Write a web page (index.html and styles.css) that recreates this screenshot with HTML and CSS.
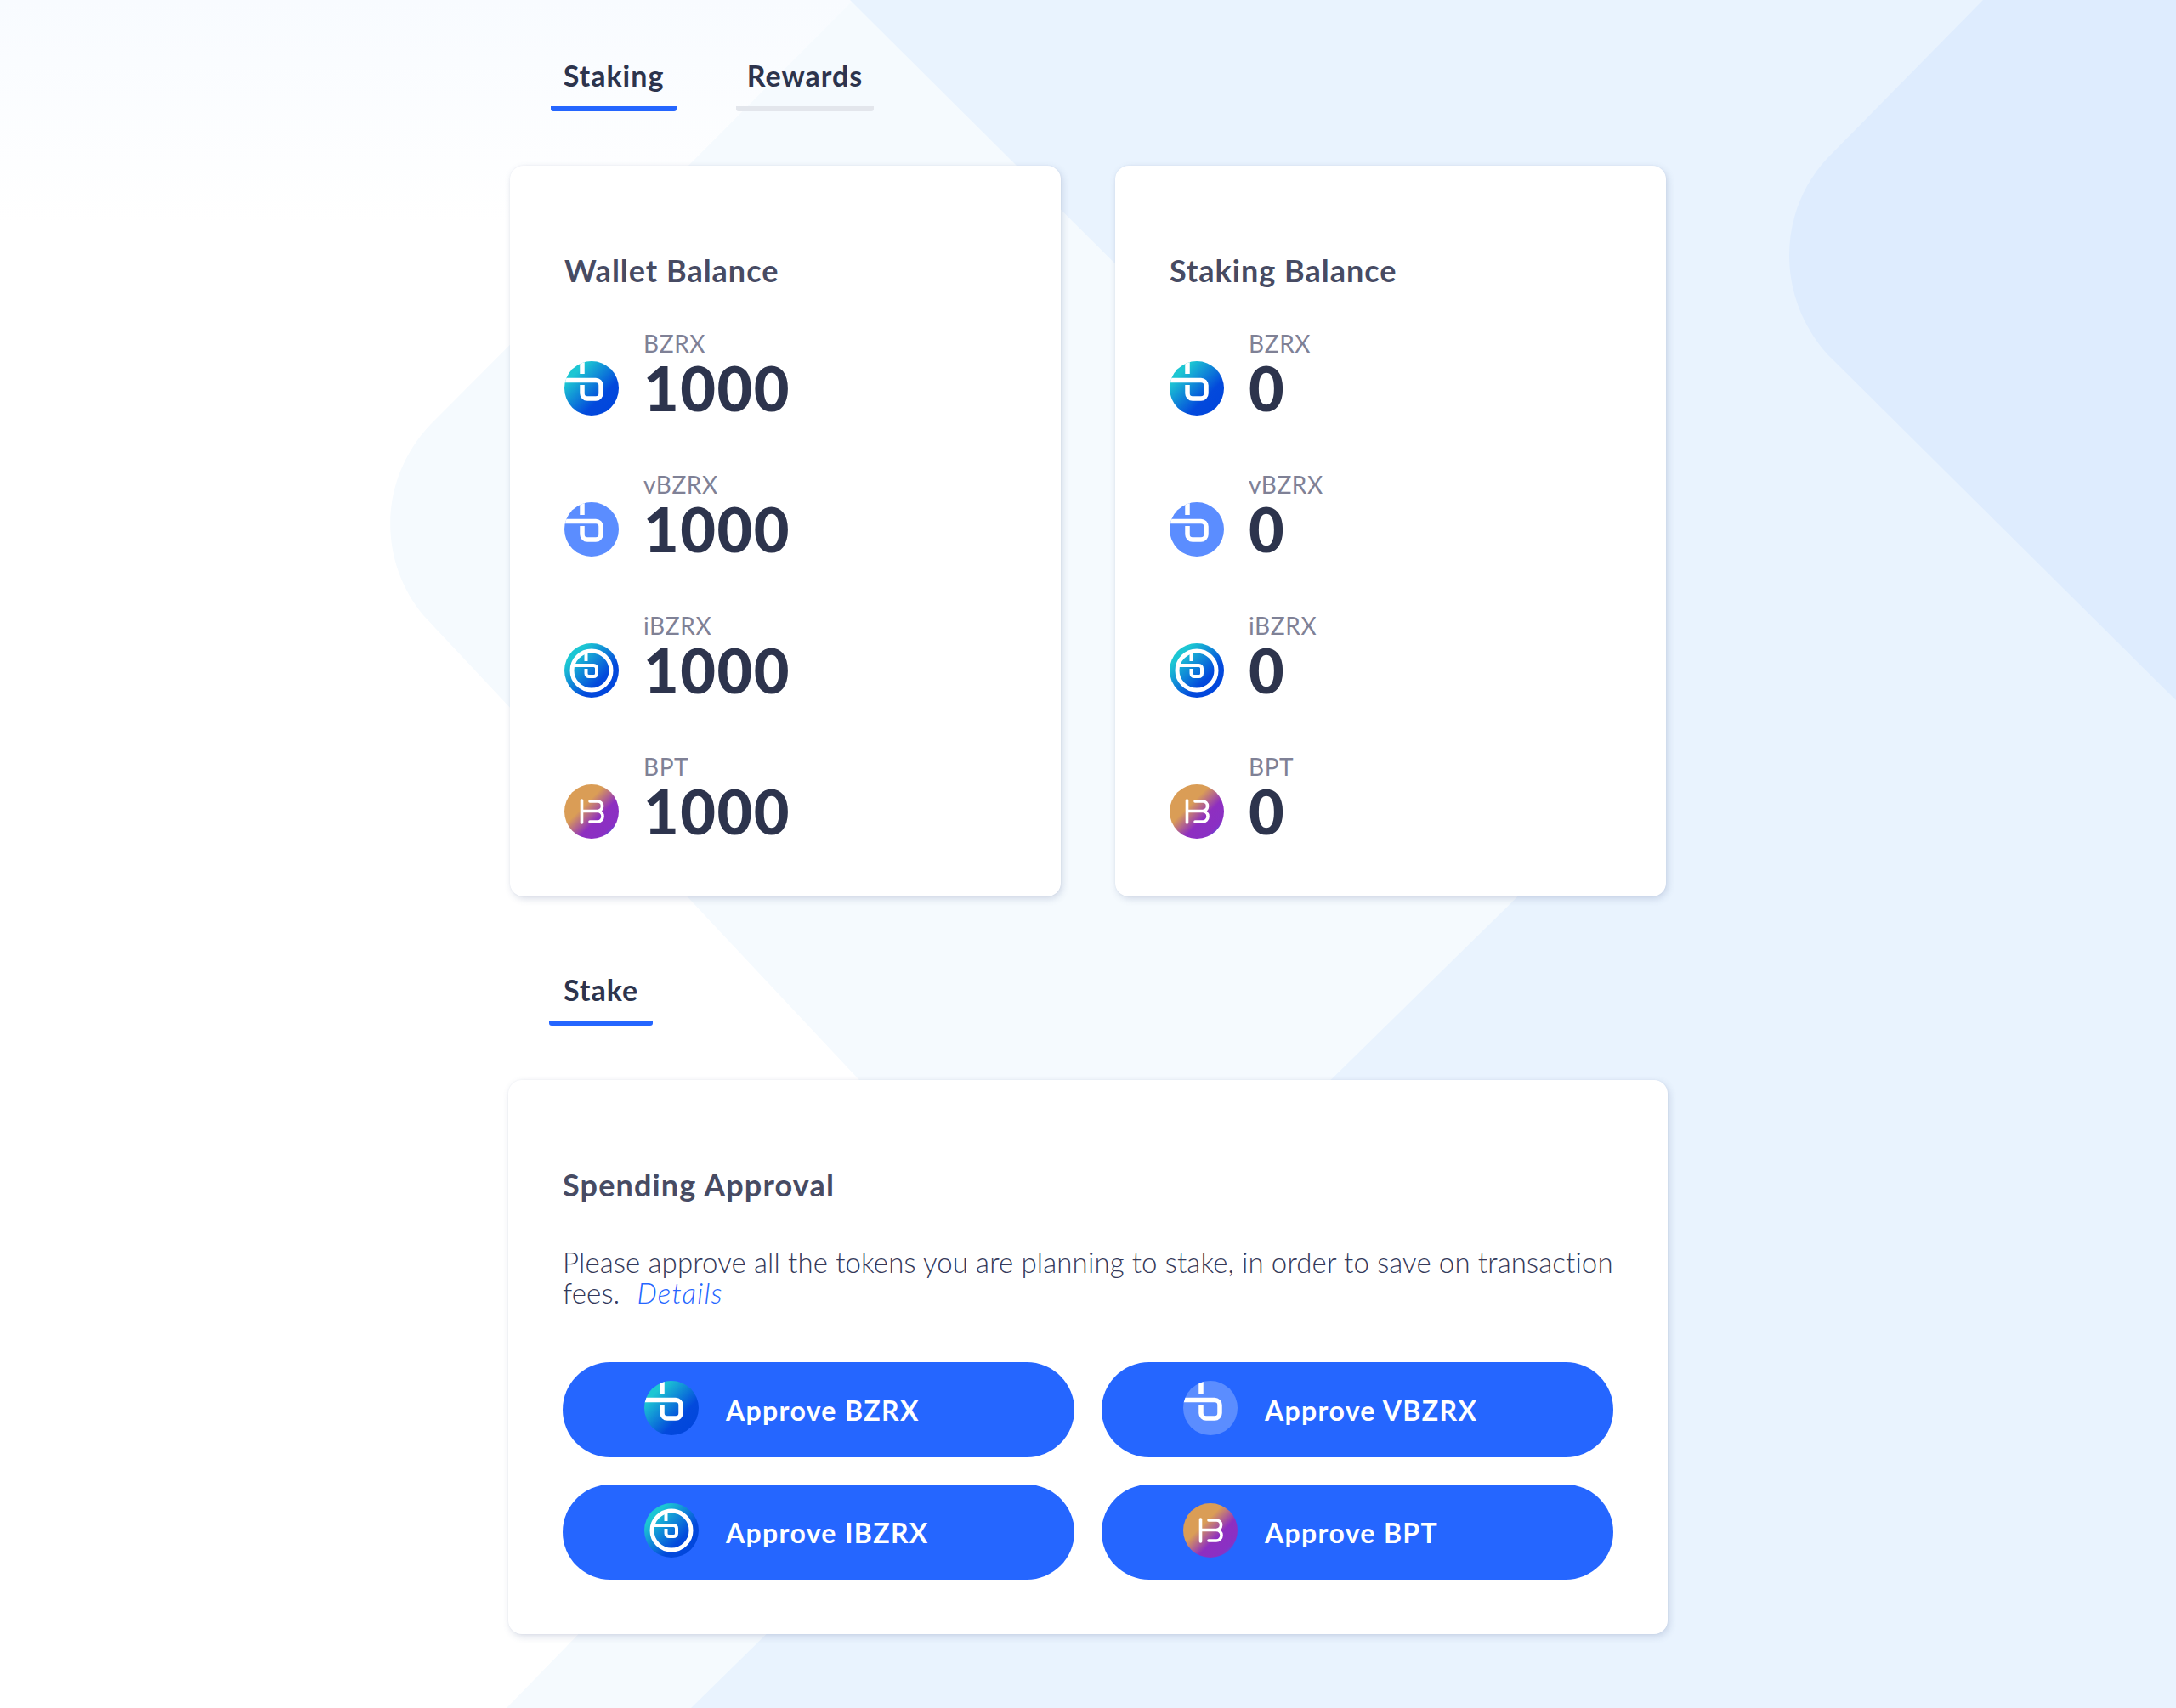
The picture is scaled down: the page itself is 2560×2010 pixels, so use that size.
FILE: index.html
```html
<!DOCTYPE html>
<html lang="en">
<head>
<meta charset="utf-8">
<title>Staking</title>
<link rel="stylesheet" href="styles.css">
</head>
<body>
<svg class="defs" aria-hidden="true">
  <defs>
    <linearGradient id="gBlue" x1="0.12" y1="0.12" x2="0.88" y2="0.88">
      <stop offset="0.12" stop-color="#1cc6d3"/>
      <stop offset="0.72" stop-color="#0349dc"/>
      <stop offset="1" stop-color="#0146dc"/>
    </linearGradient>
    <linearGradient id="gBpt" x1="0.12" y1="0.12" x2="0.88" y2="0.88">
      <stop offset="0.34" stop-color="#da9d56"/>
      <stop offset="0.66" stop-color="#8e2fc0"/>
      <stop offset="0.92" stop-color="#8a30c4"/>
      <stop offset="1" stop-color="#5a50d8"/>
    </linearGradient>
    <clipPath id="cCircle"><circle cx="32" cy="32" r="32"/></clipPath>
    <symbol id="glyphB" viewBox="0 0 64 64">
      <g clip-path="url(#cCircle)" fill="none" stroke="#fff" stroke-width="5.5">
        <path d="M21 -1V15"/>
        <path d="M-1 22.5H37a6 6 0 0 1 6 6V38a6 6 0 0 1 -6 6H27a6 6 0 0 1 -6 -6V28"/>
      </g>
    </symbol>
    <symbol id="icoBzrx" viewBox="0 0 64 64">
      <circle cx="32" cy="32" r="32" fill="url(#gBlue)"/>
      <use href="#glyphB"/>
    </symbol>
    <symbol id="icoVbzrx" viewBox="0 0 64 64">
      <circle cx="32" cy="32" r="32" fill="#5b8dff"/>
      <use href="#glyphB"/>
    </symbol>
    <symbol id="icoIbzrx" viewBox="0 0 64 64">
      <circle cx="32" cy="32" r="32" fill="url(#gBlue)"/>
      <circle cx="32" cy="32" r="23" fill="none" stroke="#fff" stroke-width="5"/>
      <g fill="none" stroke="#fff" stroke-width="4">
        <path d="M25.5 10V21"/>
        <path d="M10 26H34.5a3.5 3.5 0 0 1 3.5 3.5V35.5a3.5 3.5 0 0 1 -3.5 3.5H29a3.5 3.5 0 0 1 -3.5 -3.5V30"/>
      </g>
    </symbol>
    <symbol id="icoBpt" viewBox="0 0 64 64">
      <circle cx="32" cy="32" r="32" fill="url(#gBpt)"/>
      <g fill="none" stroke="#fff" stroke-width="3.6" stroke-linecap="round">
        <path d="M20.5 19V45"/>
        <path d="M21 31.5H39"/>
        <path d="M30 20H39a5.5 5.5 0 0 1 5.5 5.5V26a5.5 5.5 0 0 1 -5.5 5.5a6 6 0 0 1 6 6V38a6 6 0 0 1 -6 6H30"/>
      </g>
    </symbol>
  </defs>
</svg>

<svg class="backdrop" viewBox="0 0 2560 2010" aria-hidden="true">
  <defs>
    <linearGradient id="gFade" x1="0" y1="0" x2="0" y2="1">
      <stop offset="0" stop-color="#f8fbff"/>
      <stop offset="0.13" stop-color="#fff"/>
    </linearGradient>
  </defs>
  <rect width="2560" height="2010" fill="url(#gFade)"/>
  <path class="shape-a" d="M1004 0L506 500C445 565 445 660 498 724L1160 1430L596 2010H2560V0Z"/>
  <path class="shape-b" d="M1000 0L1924 919L813 2010H2560V0Z"/>
  <path class="shape-c" d="M2333 0L2150 186C2090 250 2090 350 2150 417L2560 824V0Z"/>
</svg>

<main class="page">
  <nav class="tabs">
    <a class="tab tab-active">Staking</a>
    <a class="tab tab-idle">Rewards</a>
  </nav>

  <section class="balances">
    <article class="card">
      <h2 class="card-title">Wallet Balance</h2>
      <ul class="tokens">
        <li class="token"><svg class="token-icon"><use href="#icoBzrx"/></svg><div class="token-data"><span class="token-name">BZRX</span><span class="token-value">1000</span></div></li>
        <li class="token"><svg class="token-icon"><use href="#icoVbzrx"/></svg><div class="token-data"><span class="token-name">vBZRX</span><span class="token-value">1000</span></div></li>
        <li class="token"><svg class="token-icon"><use href="#icoIbzrx"/></svg><div class="token-data"><span class="token-name">iBZRX</span><span class="token-value">1000</span></div></li>
        <li class="token"><svg class="token-icon"><use href="#icoBpt"/></svg><div class="token-data"><span class="token-name">BPT</span><span class="token-value">1000</span></div></li>
      </ul>
    </article>
    <article class="card">
      <h2 class="card-title">Staking Balance</h2>
      <ul class="tokens">
        <li class="token"><svg class="token-icon"><use href="#icoBzrx"/></svg><div class="token-data"><span class="token-name">BZRX</span><span class="token-value">0</span></div></li>
        <li class="token"><svg class="token-icon"><use href="#icoVbzrx"/></svg><div class="token-data"><span class="token-name">vBZRX</span><span class="token-value">0</span></div></li>
        <li class="token"><svg class="token-icon"><use href="#icoIbzrx"/></svg><div class="token-data"><span class="token-name">iBZRX</span><span class="token-value">0</span></div></li>
        <li class="token"><svg class="token-icon"><use href="#icoBpt"/></svg><div class="token-data"><span class="token-name">BPT</span><span class="token-value">0</span></div></li>
      </ul>
    </article>
  </section>

  <nav class="tabs tabs-stake">
    <a class="tab tab-active tab-stake">Stake</a>
  </nav>

  <section class="card card-wide">
    <h2 class="card-title">Spending Approval</h2>
    <p class="note">Please approve all the tokens you are planning to stake, in order to save on transaction<br>fees. <a class="note-link">Details</a></p>
    <div class="actions">
      <button class="approve"><svg class="approve-icon"><use href="#icoBzrx"/></svg>Approve BZRX</button>
      <button class="approve"><svg class="approve-icon"><use href="#icoVbzrx"/></svg>Approve VBZRX</button>
      <button class="approve"><svg class="approve-icon"><use href="#icoIbzrx"/></svg>Approve IBZRX</button>
      <button class="approve"><svg class="approve-icon"><use href="#icoBpt"/></svg>Approve BPT</button>
    </div>
  </section>
</main>
</body>
</html>
```

FILE: styles.css
```css
* { box-sizing: border-box; }

html, body {
  margin: 0;
  padding: 0;
}

body {
  position: relative;
  height: 2010px;
  overflow: hidden;
  background: #fff;
  color: #2d344d;
  font-family: "Lato", "Noto Sans", sans-serif;
}

.defs {
  position: absolute;
  width: 0;
  height: 0;
}

.backdrop {
  position: absolute;
  left: 0;
  top: 0;
  width: 2560px;
  height: 2010px;
}

.shape-a { fill: #f5fafe; }
.shape-b { fill: #e9f3fe; }
.shape-c { fill: #deecfe; }

.page {
  position: relative;
  width: 1364px;
  margin: 0 auto;
  padding-top: 69px;
}

.tabs {
  display: flex;
  gap: 70px;
  padding-left: 50px;
  margin-bottom: 64px;
}

.tabs-stake {
  margin-top: 90px;
  padding-left: 48px;
}

.tab {
  padding: 0 0 16px;
  font-size: 34px;
  line-height: 40px;
  font-weight: 700;
  letter-spacing: 1px;
  text-align: center;
  color: #2d344d;
  border-bottom: 6px solid #e3e6ec;
  border-radius: 0 0 3px 3px;
}

.tab-active { width: 148px; border-bottom-color: #2566ff; }
.tab-idle { width: 162px; }
.tab-stake { width: 122px; }

.balances {
  display: grid;
  grid-template-columns: 648px 648px;
  gap: 64px;
  padding: 0 2px;
}

.card {
  padding: 103px 64px 63px;
  background: #fff;
  border-radius: 16px;
  box-shadow: 2px 3px 8px rgba(70, 90, 140, 0.2), 0 0 2px rgba(70, 90, 140, 0.08);
}

.card-title {
  margin: 0 0 50px;
  font-size: 36px;
  line-height: 40px;
  font-weight: 700;
  letter-spacing: 1px;
  color: #474b63;
}

.tokens {
  display: flex;
  flex-direction: column;
  gap: 60px;
  margin: 0;
  padding: 0;
  list-style: none;
}

.token {
  display: flex;
  align-items: flex-end;
  gap: 29px;
}

.token-icon {
  flex: none;
  width: 64px;
  height: 64px;
  margin-bottom: 5px;
}

.token-data {
  display: flex;
  flex-direction: column;
  padding-bottom: 2px;
}

.token-name {
  font-size: 28px;
  line-height: 32px;
  font-weight: 400;
  letter-spacing: 0.6px;
  color: #7f8196;
}

.token-value {
  font-size: 72px;
  line-height: 72px;
  font-weight: 900;
  letter-spacing: 1.5px;
  color: #2d344d;
}

.card-wide {
  padding-bottom: 64px;
}

.card-wide .card-title {
  margin-bottom: 53px;
  letter-spacing: 1.15px;
}

.note {
  margin: 0 0 64px;
  font-size: 33px;
  line-height: 36px;
  font-weight: 300;
  letter-spacing: 0.13px;
  color: #34395a;
}

.note-link {
  margin-left: 11px;
  font-style: italic;
  letter-spacing: 1.2px;
  color: #2566ff;
}

.actions {
  display: grid;
  grid-template-columns: 602px 602px;
  gap: 32px;
}

.approve {
  display: flex;
  align-items: center;
  gap: 32px;
  height: 112px;
  padding: 2px 0 0 96px;
  border: 0;
  border-radius: 56px;
  background: #2566ff;
  color: #fff;
  font-family: inherit;
  font-size: 32px;
  line-height: 40px;
  font-weight: 700;
  letter-spacing: 1.35px;
}

.approve-icon {
  flex: none;
  width: 64px;
  height: 64px;
  margin-bottom: 6px;
}
```
